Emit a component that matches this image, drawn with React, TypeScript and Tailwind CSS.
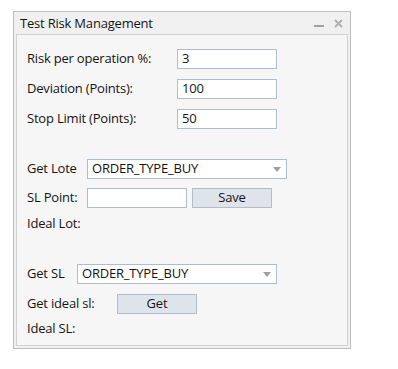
import React from "react";

const font = { fontFamily: '"Open Sans", "Noto Sans", sans-serif' };

function Input({ value, w }: { value: string; w: string }) {
  return (
    <div className={`${w} h-[20px] border border-[#aebdcc] bg-white flex items-center pl-[4px] text-[13px] tracking-[-0.2px] text-[#141414]`}>
      {value}
    </div>
  );
}

function Combo({ value }: { value: string }) {
  return (
    <div className="w-[200px] h-[20px] border border-[#aebdcc] bg-white flex items-center pl-[4px] pr-[5px] text-[13px] tracking-[-0.2px] text-[#141414]">
      <span className="flex-1">{value}</span>
      <svg width="8" height="5" viewBox="0 0 8 5">
        <path d="M0 0 H8 L4 5 Z" fill="#a0a0a0" />
      </svg>
    </div>
  );
}

function Button({ label }: { label: string }) {
  return (
    <div className="w-[80px] h-[20px] border border-[#b3bdc9] bg-[#dfe3ea] flex items-center justify-center text-[13px] tracking-[-0.2px] text-[#141414]">
      {label}
    </div>
  );
}

export default function App() {
  return (
    <div className="w-[398px] h-[369px] bg-white pt-[11px] pl-[13px]" style={font}>
      <div className="w-[338px] h-[338px] border border-[#bdbdbd] bg-[#f0f0f0] flex flex-col px-[2px] pb-[2px]">
        <div className="h-[22px] flex items-center pl-[4px] pr-[5px] shrink-0">
          <span className="flex-1 text-[13px] tracking-[-0.2px] text-[#141414] pt-[1px]">Test Risk Management</span>
          <div className="w-[10px] h-[2px] bg-[#a0a0a0] mt-[6px] mr-[10px]" />
          <svg width="9" height="9" viewBox="0 0 9 9" className="mt-[1px]">
            <path d="M1 1 L8 8 M8 1 L1 8" stroke="#b0b0b0" strokeWidth="2" />
          </svg>
        </div>
        <div className="flex-1 border border-[#d2d2d2] bg-[#f6f6f6] pl-[10px] pt-[14px] text-[13px] tracking-[-0.2px] text-[#141414]">
          <div className="flex flex-col gap-[10px]">
            <div className="h-[20px] flex items-center">
              <span className="w-[150px]">Risk per operation %:</span>
              <Input value="3" w="w-[100px]" />
            </div>
            <div className="h-[20px] flex items-center">
              <span className="w-[150px]">Deviation (Points):</span>
              <Input value="100" w="w-[100px]" />
            </div>
            <div className="h-[20px] flex items-center">
              <span className="w-[150px]">Stop Limit (Points):</span>
              <Input value="50" w="w-[100px]" />
            </div>
          </div>
          <div className="flex flex-col gap-[9px] mt-[30px]">
            <div className="h-[20px] flex items-center">
              <span className="w-[60px]">Get Lote</span>
              <Combo value="ORDER_TYPE_BUY" />
            </div>
            <div className="h-[20px] flex items-center">
              <span className="w-[60px]">SL Point:</span>
              <Input value="" w="w-[100px]" />
              <div className="ml-[5px]">
                <Button label="Save" />
              </div>
            </div>
          </div>
          <div className="h-[20px] flex items-center mt-[6px]">Ideal Lot:</div>
          <div className="flex flex-col gap-[10px] mt-[30px]">
            <div className="h-[20px] flex items-center">
              <span className="w-[50px]">Get SL</span>
              <Combo value="ORDER_TYPE_BUY" />
            </div>
            <div className="h-[20px] flex items-center">
              <span className="w-[90px]">Get ideal sl:</span>
              <Button label="Get" />
            </div>
          </div>
          <div className="h-[20px] flex items-center mt-[5px]">Ideal SL:</div>
        </div>
      </div>
    </div>
  );
}
